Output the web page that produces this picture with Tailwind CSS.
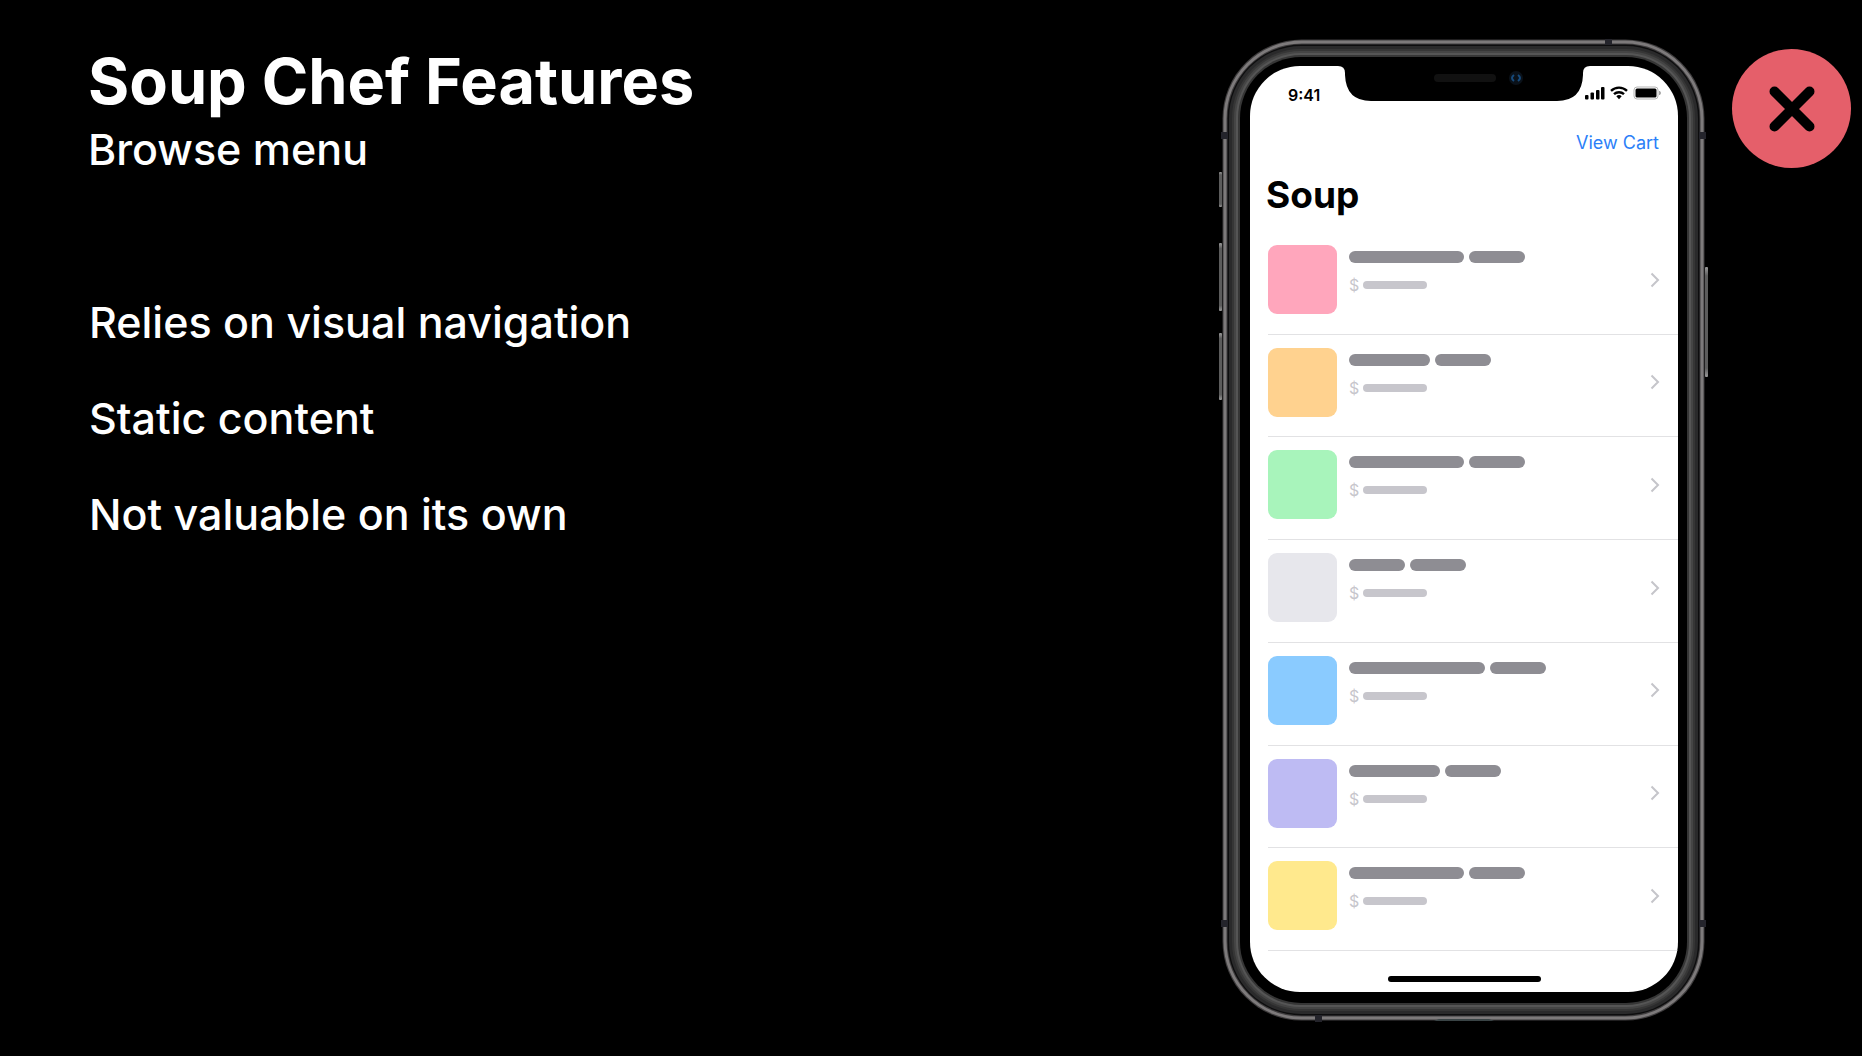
<!DOCTYPE html>
<html lang="en">
<head>
<meta charset="utf-8">
<title>Soup Chef Features</title>
<script src="https://cdn.jsdelivr.net/npm/@tailwindcss/browser@4"></script>
</head>
<body class="bg-black text-white font-['Inter',sans-serif]">
<main class="flex min-h-screen items-start justify-between">
  <section class="pt-[41px] pl-[88px]">
    <h1 class="text-[63px] leading-20 font-bold">Soup Chef Features</h1>
    <p class="text-[43px] leading-14 font-medium">Browse menu</p>
    <ul class="mt-[117px] flex flex-col gap-10 pl-px text-[43px] leading-14 font-medium">
      <li>Relies on visual navigation</li>
      <li>Static content</li>
      <li>Not valuable on its own</li>
    </ul>
  </section>

  <div class="flex items-start pr-[11px]">
    <div class="relative mt-[38px] h-[984px] w-[492px] px-8 pt-7">
      <!-- Phone body -->
      <svg class="absolute inset-0 size-full" viewBox="0 0 492 984" fill="none" aria-hidden="true">
        <defs>
          <linearGradient id="key" x1="0" y1="0" x2="0" y2="1">
            <stop offset="0" stop-color="#9a9a9a"/><stop offset=".08" stop-color="#5c5c5c"/>
            <stop offset=".92" stop-color="#5c5c5c"/><stop offset="1" stop-color="#9a9a9a"/>
          </linearGradient>
        </defs>
        <g fill="url(#key)">
          <rect x="1" y="134" width="3" height="35" rx="1"/>
          <rect x="1" y="205" width="3" height="68" rx="1"/>
          <rect x="1" y="295" width="3" height="67" rx="1"/>
          <rect x="487" y="229" width="3" height="110" rx="1"/>
        </g>
        <rect x="4.500" y="1.500" width="482" height="981" rx="79" fill="#3f3d3e"/>
        <rect x="7" y="4" width="477" height="976" rx="77" stroke="#7d7a7b" stroke-width="3"/>
        <rect x="9.500" y="6.500" width="472" height="971" rx="74" fill="#0d0d0e"/>
        <rect x="11" y="8" width="469" height="968" rx="72" fill="#2a2a2b"/>
        <rect x="14" y="11" width="463" height="962" rx="69" fill="#363636"/>
        <rect x="16" y="13" width="459" height="958" rx="67" fill="#454545"/>
        <rect x="18" y="15" width="455" height="954" rx="65" fill="#555"/>
        <rect x="20" y="17" width="451" height="950" rx="63" fill="#363636"/>
        <rect x="22" y="19" width="447" height="946" rx="61" fill="#000"/>
        <g fill="#24242b">
          <rect x="3" y="94" width="7" height="7"/>
          <rect x="3" y="882" width="7" height="7"/>
          <rect x="481" y="94" width="7" height="7"/>
          <rect x="481" y="882" width="7" height="7"/>
          <rect x="387" y="1" width="7" height="6"/>
          <rect x="97" y="977" width="7" height="7"/>
        </g>
        <path d="M216 983h60l-5-2h-50z" fill="#3a4446"/>
      </svg>

      <div class="relative h-[926px] overflow-hidden rounded-[50px] bg-white text-black">
        <!-- Notch with speaker and camera -->
        <svg class="absolute top-0 left-1/2 -translate-x-1/2" width="252" height="36" viewBox="0 0 252 36" aria-hidden="true">
          <path d="M0 0q7 0 7 7v2q1 26 26 26h186q25 0 26-26v-2q0-7 7-7z" fill="#000"/>
          <rect x="96" y="8" width="62" height="8" rx="4" fill="#111"/>
          <circle cx="178" cy="12" r="7" fill="#0a1119"/>
          <path d="M176 9q-4 3 0 6M180 9q4 3 0 6" fill="none" stroke="#164a7c" stroke-width="2"/>
        </svg>

        <div class="flex h-12 items-center justify-between pt-[10px] pr-4 pl-[38px]">
          <span class="text-[16px] leading-6 font-semibold">9:41</span>
          <svg class="-mt-1" width="77" height="14" viewBox="0 0 77 14" fill="none" aria-label="Signal, Wi-Fi, battery">
            <g fill="#000">
              <rect x="0" y="9" width="3.500" height="4.500" rx="1"/>
              <rect x="5.500" y="6.500" width="3.500" height="7" rx="1"/>
              <rect x="11" y="4" width="3.500" height="9.500" rx="1"/>
              <rect x="16" y="1" width="3.500" height="12.500" rx="1"/>
            </g>
            <g stroke="#000" stroke-width="2.400">
              <path d="M26 4.900a11.500 11.500 0 0 1 16 0"/>
              <path d="M29 8.200a7.200 7.200 0 0 1 10 0"/>
            </g>
            <path d="M34 13.200l-2.700-2.900a4 4 0 0 1 5.400 0z" fill="#000"/>
            <rect x="49" y="1" width="24" height="12" rx="3" stroke="#b5b5b5"/>
            <rect x="50.500" y="2.500" width="21" height="9" rx="1.500" fill="#000"/>
            <path d="M74.500 5q2 2 0 4z" fill="#a5a5a5" stroke="#a5a5a5"/>
          </svg>
        </div>

        <div class="flex justify-end pt-[17px] pr-[19px]">
          <a href="#cart" class="text-[18px] leading-6 text-[#2b80f8]">View Cart</a>
        </div>
        <h2 class="mt-4 pl-4 text-[37px] leading-12 font-bold">Soup</h2>

        <ul class="mt-[13px] ml-[18px] flex h-[719px] flex-col" id="soups"></ul>
        <div class="mx-auto mt-[25px] h-[6px] w-[153px] rounded-full bg-black"></div>
      </div>
    </div>

    <button type="button" aria-label="Close" class="mt-[49px] ml-[22px] flex size-[119px] items-center justify-center rounded-full bg-[#e55f6a]">
      <svg width="46" height="46" viewBox="0 0 46 46" fill="none" stroke="#000" stroke-width="10" stroke-linecap="round"><path d="M5.500 5.500l35 35M40.500 5.500l-35 35"/></svg>
    </button>
  </div>
</main>
<script>
  const soups = [["#ffa6bc",115],["#ffd28f",81],["#a8f4bb",115],["#e7e7ec",56],["#8acbff",136],["#bebbf3",91],["#ffe98d",115]];
  document.getElementById("soups").innerHTML = soups.map(([color, width]) => `
    <li class="flex-1 border-b border-[#e2e2e4]">
      <a href="#item" aria-label="Soup item" class="flex pt-[13px]">
        <span class="size-[69px] rounded-[9px]" style="background:${color}"></span>
        <span class="ml-3 flex-1 pt-[6px]">
          <span class="flex gap-[5px]">
            <span class="h-3 rounded-full bg-[#8e8d93]" style="width:${width}px"></span>
            <span class="h-3 w-14 rounded-full bg-[#8e8d93]"></span>
          </span>
          <span class="mt-3 flex items-center gap-1 text-[16px] leading-5 text-[#c7c6cc]">$<span class="h-2 w-16 rounded-full bg-[#c7c6cc]"></span></span>
        </span>
        <svg class="mr-[18px] self-center" width="10" height="16" viewBox="0 0 10 16" fill="none" stroke="#c5c5ca" stroke-width="2"><path d="M1.500 1.500L8 8l-6.500 6.500"/></svg>
      </a>
    </li>`).join("");
</script>
</body>
</html>
